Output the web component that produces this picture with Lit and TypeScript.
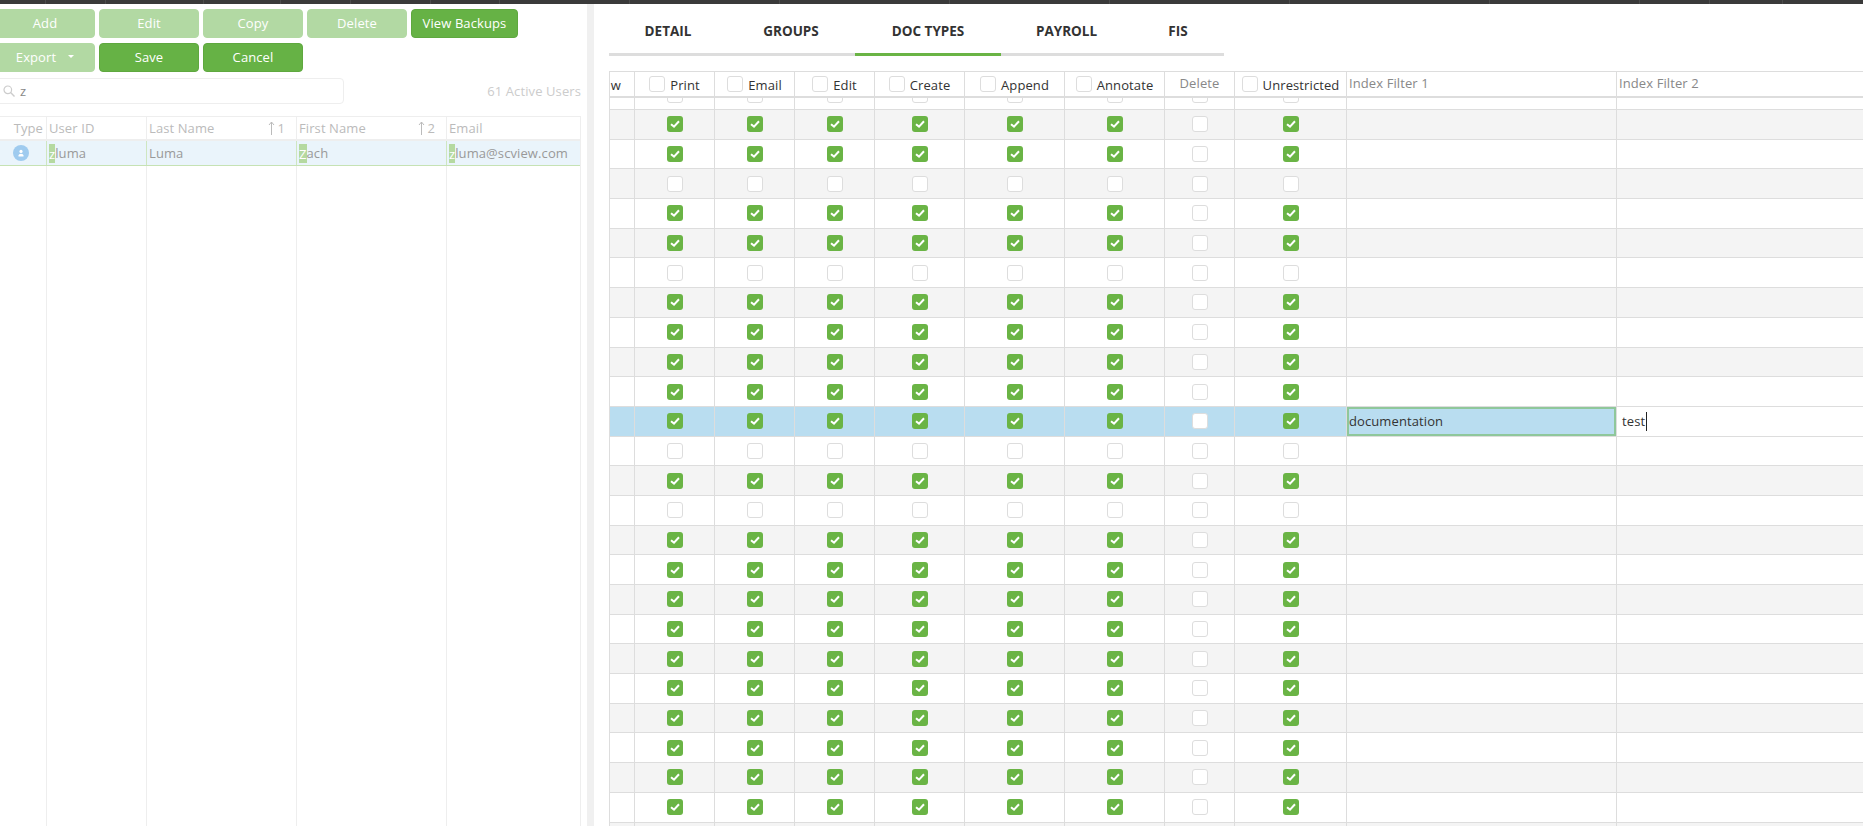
import { LitElement, css, html, svg } from 'lit';
import { customElement } from 'lit/decorators.js';

const COLUMNS = ['Print', 'Email', 'Edit', 'Create', 'Append', 'Annotate', 'Delete', 'Unrestricted'];
const EMPTY_ROWS = [0, 3, 6, 12, 14];
const ROW_COUNT = 26;
const SELECTED_ROW = 11;
const BAR_SEGMENTS = [46, 60, 98, 77, 70, 80, 69, 130, 150, 170, 160, 180, 200, 150, 70, 73];

const tick = svg`<svg viewBox="0 0 16 16" width="16" height="16"><polyline points="4,8.2 7,10.6 12,5.2" fill="none" stroke="#fff" stroke-width="2"/></svg>`;

@customElement('app-root')
export class AppRoot extends LitElement {
  static styles = css`
    :host {
      display: block;
      height: 826px;
      overflow: hidden;
      font: 13px 'Open Sans', sans-serif;
      letter-spacing: 0.1px;
      color: #333;
      background: #fff;
    }
    .page {
      display: flex;
      flex-direction: column;
      height: 826px;
    }
    .topbar {
      display: flex;
      flex: none;
      height: 4px;
      background: #3a3a3a;
    }
    .topbar span {
      flex: none;
      box-sizing: border-box;
      border-right: 1px solid #4c4c4c;
    }
    .body {
      display: flex;
      flex: 1;
      min-height: 0;
    }

    /* left side */
    .left {
      display: flex;
      flex: none;
      flex-direction: column;
      width: 587px;
      overflow: hidden;
    }
    .toolbar {
      display: flex;
      flex-wrap: wrap;
      gap: 5px 4px;
      width: 540px;
      margin: 5px 0 0 -5px;
    }
    .btn {
      display: flex;
      align-items: center;
      justify-content: center;
      gap: 12px;
      box-sizing: border-box;
      width: 100px;
      height: 29px;
      padding-bottom: 2px;
      border: 1px solid #5fa83f;
      border-radius: 4px;
      background: #66b245;
      color: #fff;
    }
    .btn.wide {
      width: 107px;
    }
    .btn.off {
      border-color: #b2d9a3;
      background: #b2d9a3;
    }
    .caret {
      border: 3px solid transparent;
      border-top: 3px solid #fff;
      margin-top: 3px;
    }
    .search-row {
      display: flex;
      align-items: center;
      justify-content: space-between;
      margin: 6px 6px 0 -5px;
    }
    .search {
      display: flex;
      align-items: center;
      gap: 5px;
      box-sizing: border-box;
      width: 349px;
      height: 26px;
      padding-left: 7px;
      border: 1px solid #eee;
      border-radius: 4px;
      color: #888;
    }
    .count {
      color: #ccc;
    }
    .users {
      display: flex;
      flex: 1;
      flex-direction: column;
      width: 581px;
      margin-top: 12px;
      border-right: 1px solid #eee;
      box-sizing: border-box;
    }
    .users-row {
      display: grid;
      grid-template-columns: 46px 100px 150px 150px 1fr;
    }
    .users-row > div {
      display: flex;
      align-items: center;
      box-sizing: border-box;
      padding-left: 2px;
      border-left: 1px solid #eee;
      white-space: nowrap;
    }
    .users-row > div:first-child {
      border-left: none;
    }
    .users-head {
      height: 25px;
      border-top: 1px solid #eee;
      border-bottom: 2px solid #eee;
      box-sizing: border-box;
      color: #bbb;
    }
    .users-head > div {
      justify-content: space-between;
      padding-right: 11px;
    }
    .users-head > div:first-child {
      justify-content: flex-end;
      padding-right: 3px;
    }
    .users-head > div:nth-child(2),
    .users-head > div:last-child {
      justify-content: flex-start;
    }
    .sort {
      display: flex;
      align-items: center;
      gap: 2px;
    }
    .users-data {
      height: 25px;
      box-sizing: border-box;
      background: #eaf4fb;
      border-bottom: 1px solid #c6e2b4;
      color: #999;
    }
    .users-data > div {
      border-left-color: #cfe6c0;
    }
    .users-data > div:first-child {
      justify-content: center;
      padding: 0 4px 0 0;
    }
    mark {
      display: inline-block;
      height: 19px;
      line-height: 20px;
      background: #b5d9a0;
      color: #fff;
    }
    .users-fill {
      flex: 1;
    }

    .gutter {
      flex: none;
      width: 7px;
      background: #f0f0f0;
    }

    /* right side */
    .right {
      flex: 1;
      min-width: 0;
      padding-left: 15px;
      overflow: hidden;
    }
    .tabs {
      display: grid;
      grid-template-columns: 118px 128px 146px 131px 92px;
      width: 615px;
    }
    .tab {
      display: flex;
      align-items: center;
      justify-content: center;
      box-sizing: border-box;
      height: 52px;
      padding-top: 5px;
      border-bottom: 3px solid #ddd;
      font-size: 13.5px;
      font-weight: 700;
      letter-spacing: 0;
      white-space: nowrap;
    }
    .tab.active {
      border-bottom-color: #6ab445;
    }
    .grid {
      margin-top: 15px;
    }
    .grid-row {
      display: grid;
      grid-template-columns: 25px 80px 80px 80px 90px 100px 100px 70px 112px 270px 1fr;
      box-sizing: border-box;
      height: 29.7px;
      border-bottom: 1px solid #ddd;
    }
    .grid-row > div {
      display: flex;
      align-items: center;
      justify-content: center;
      box-sizing: border-box;
      min-width: 0;
      border-left: 1px solid #ddd;
    }
    .grid-head {
      height: 27px;
      border-top: 1px solid #ddd;
      border-bottom: 2px solid #ddd;
    }
    .grid-head > div {
      gap: 5px;
      white-space: nowrap;
    }
    .grid-head > div.view {
      justify-content: flex-end;
      padding: 2px 13px 0 0;
      color: #333;
    }
    .grid-head label {
      padding-top: 2px;
      color: #333;
    }
    .grid-head > div.plain {
      padding-bottom: 2px;
      color: #888;
    }
    .grid-head > div.filter {
      justify-content: flex-start;
      padding: 0 0 3px 2px;
      color: #888;
    }
    .grid-row.alt {
      background: #f4f4f4;
    }
    .grid-row.selected {
      background: #b9ddf0;
    }
    .grid-row.clipped {
      height: 12px;
    }
    .grid-row.clipped > div {
      align-items: flex-end;
      overflow: hidden;
      padding-bottom: 6px;
    }
    .box {
      flex: none;
      box-sizing: border-box;
      width: 16px;
      height: 16px;
      border: 1px solid #ddd;
      border-radius: 3px;
      background: #fff;
    }
    .box.on {
      border: none;
      background: #6ab445;
    }
    .box svg {
      display: block;
    }
    .grid-row > div.focused {
      justify-content: flex-start;
      padding-left: 2px;
      box-shadow: inset 0 0 0 2px #8fc79b;
    }
    .grid-row > div.editing {
      justify-content: flex-start;
      padding-left: 5px;
      background: #fff;
    }
    .caret-line {
      width: 1px;
      height: 19px;
      margin-left: 1px;
      background: #222;
    }
  `;

  private box(on: boolean) {
    return html`<span class="box ${on ? 'on' : ''}">${on ? tick : ''}</span>`;
  }

  private sortIcon(order: number) {
    return html`<span class="sort">
      <svg width="7" height="14" viewBox="0 0 7 14"><path d="M3.5 1v13M1 4l2.5-3L6 4" fill="none" stroke="#bbb"/></svg>
      ${order}
    </span>`;
  }

  private renderRow(i: number) {
    const on = !EMPTY_ROWS.includes(i);
    const selected = i === SELECTED_ROW;
    const classes = ['grid-row', i % 2 ? 'alt' : '', selected ? 'selected' : '', i === 0 ? 'clipped' : ''].join(' ');
    return html`<div class=${classes}>
      <div></div>
      ${COLUMNS.map((c) => html`<div>${this.box(on && c !== 'Delete')}</div>`)}
      ${selected
        ? html`<div class="focused">documentation</div>
            <div class="editing">test<span class="caret-line"></span></div>`
        : html`<div></div><div></div>`}
    </div>`;
  }

  render() {
    return html`<div class="page">
      <div class="topbar">
        ${BAR_SEGMENTS.map((w) => html`<span style="width:${w}px"></span>`)}
      </div>
      <div class="body">
        <section class="left">
          <div class="toolbar">
            <div class="btn off">Add</div>
            <div class="btn off">Edit</div>
            <div class="btn off">Copy</div>
            <div class="btn off">Delete</div>
            <div class="btn wide">View Backups</div>
            <div class="btn off">Export <span class="caret"></span></div>
            <div class="btn">Save</div>
            <div class="btn">Cancel</div>
          </div>
          <div class="search-row">
            <div class="search">
              <svg width="12" height="12" viewBox="0 0 12 12"><circle cx="4.8" cy="4.8" r="3.8" fill="none" stroke="#ccc" stroke-width="1.2"/><path d="M7.6 7.6L11.5 11.5" stroke="#ccc" stroke-width="1.4"/></svg>
              z
            </div>
            <span class="count">61 Active Users</span>
          </div>
          <div class="users">
            <div class="users-row users-head">
              <div>Type</div>
              <div>User ID</div>
              <div>Last Name ${this.sortIcon(1)}</div>
              <div>First Name ${this.sortIcon(2)}</div>
              <div>Email</div>
            </div>
            <div class="users-row users-data">
              <div>
                <svg width="16" height="16" viewBox="0 0 16 16"><circle cx="8" cy="8" r="8" fill="#9fcbef"/><circle cx="8" cy="6.4" r="1.6" fill="#fff"/><path d="M5.5 11.5V10.4Q5.5 8.8 8 8.8T10.5 10.4V11.5Z" fill="#fff"/></svg>
              </div>
              <div><mark>z</mark>luma</div>
              <div>Luma</div>
              <div><mark>Z</mark>ach</div>
              <div><mark>z</mark>luma@scview.com</div>
            </div>
            <div class="users-row users-fill">
              <div></div><div></div><div></div><div></div><div></div>
            </div>
          </div>
        </section>
        <div class="gutter"></div>
        <section class="right">
          <div class="tabs">
            <div class="tab">DETAIL</div>
            <div class="tab">GROUPS</div>
            <div class="tab active">DOC TYPES</div>
            <div class="tab">PAYROLL</div>
            <div class="tab">FIS</div>
          </div>
          <div class="grid">
            <div class="grid-row grid-head">
              <div class="view">w</div>
              ${COLUMNS.map((c) =>
                c === 'Delete'
                  ? html`<div class="plain">${c}</div>`
                  : html`<div>${this.box(false)}<label>${c}</label></div>`
              )}
              <div class="filter">Index Filter 1</div>
              <div class="filter">Index Filter 2</div>
            </div>
            ${Array.from({ length: ROW_COUNT }, (_, i) => this.renderRow(i))}
          </div>
        </section>
      </div>
    </div>`;
  }
}
